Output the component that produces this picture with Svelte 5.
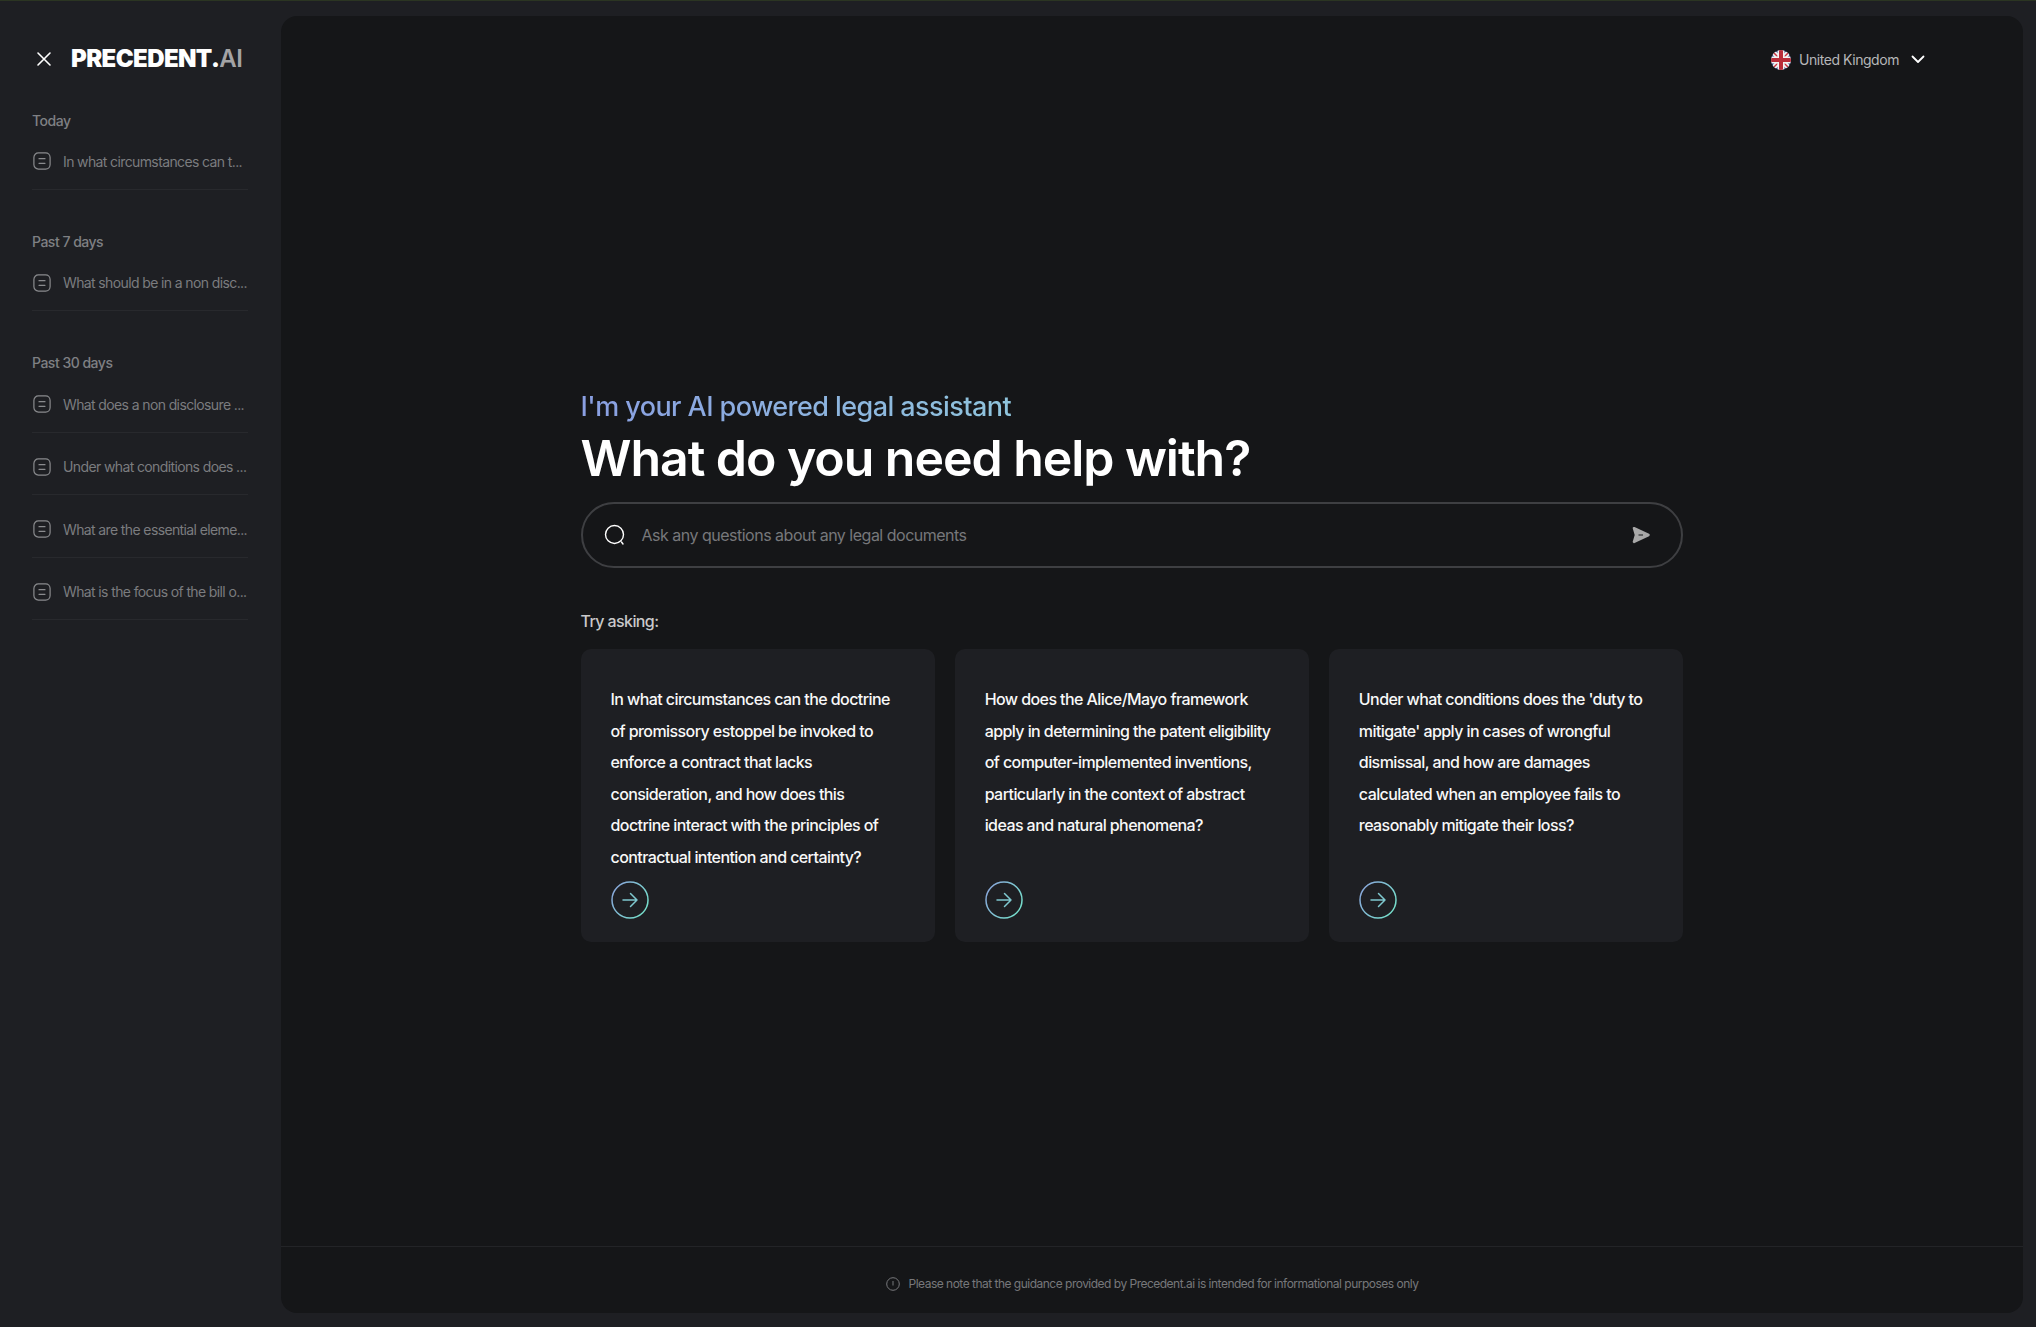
<script>
  const groups = [
    { label: 'Today', items: ['In what circumstances can t...'] },
    { label: 'Past 7 days', items: ['What should be in a non disc...'] },
    { label: 'Past 30 days', items: ['What does a non disclosure ...', 'Under what conditions does ...', 'What are the essential eleme...', 'What is the focus of the bill o...'] }
  ];
  const cards = [
    'In what circumstances can the doctrine of promissory estoppel be invoked to enforce a contract that lacks consideration, and how does this doctrine interact with the principles of contractual intention and certainty?',
    'How does the Alice/Mayo framework apply in determining the patent eligibility of computer-implemented inventions, particularly in the context of abstract ideas and natural phenomena?',
    "Under what conditions does the 'duty to mitigate' apply in cases of wrongful dismissal, and how are damages calculated when an employee fails to reasonably mitigate their loss?"
  ];
</script>

<div class="page">
  <aside class="sidebar">
    <div class="brand">
      <svg class="close" viewBox="0 0 16 16" width="16" height="16" fill="none" stroke="#fff" stroke-width="1.6" stroke-linecap="round"><path d="M2 2l12 12M14 2L2 14" /></svg>
      <span class="logo">PRECEDENT.<span class="ai">AI</span></span>
    </div>
    {#each groups as g}
      <section class="group">
        <h3>{g.label}</h3>
        {#each g.items as item}
          <div class="row">
            <svg class="doc" viewBox="0 0 18 18" width="18" height="18" fill="none" stroke="#8a8b8e" stroke-width="1.2" stroke-linecap="round">
              <rect x="0.9" y="0.9" width="16.2" height="16.2" rx="4.5" />
              <path d="M6 6.7h6M6 11.3h6" />
            </svg>
            <span class="row-text">{item}</span>
          </div>
        {/each}
      </section>
    {/each}
  </aside>

  <main class="main">
    <header class="top">
      <svg class="flag" viewBox="0 0 20 20" width="20" height="20">
        <defs><clipPath id="fc"><circle cx="10" cy="10" r="10" /></clipPath></defs>
        <g clip-path="url(#fc)">
          <rect width="20" height="20" fill="#2d3d80" />
          <path d="M0 0L20 20M20 0L0 20" stroke="#f2f2f2" stroke-width="5" />
          <path d="M0 0L20 20M20 0L0 20" stroke="#c8303e" stroke-width="1.4" />
          <path d="M10 0V20M0 10H20" stroke="#f2f2f2" stroke-width="7" />
          <path d="M10 0V20M0 10H20" stroke="#b92c3a" stroke-width="4" />
        </g>
      </svg>
      <span class="country">United Kingdom</span>
      <svg class="chev" viewBox="0 0 14 9" width="14" height="9" fill="none" stroke="#fff" stroke-width="1.8" stroke-linecap="round" stroke-linejoin="round"><path d="M1.5 1.5L7 7l5.5-5.5" /></svg>
    </header>

    <div class="content">
      <p class="sub">I'm your AI powered legal assistant</p>
      <h1>What do you need help with?</h1>
      <div class="search">
        <svg viewBox="0 0 22 22" width="22" height="22" fill="none" stroke="#fff" stroke-width="1.4" stroke-linecap="round"><circle cx="10.5" cy="10.5" r="9" /><path d="M17.5 18l1.5 2" /></svg>
        <span class="placeholder">Ask any questions about any legal documents</span>
        <svg class="send" viewBox="0 0 20 20" width="20" height="20"><path d="M3 3.2L17.500 10L3 16.800L5 10Z" fill="#a8a8a8" stroke="#a8a8a8" stroke-width="2.600" stroke-linejoin="round" /><path d="M7.500 10H12" stroke="#151618" stroke-width="1" /></svg>
      </div>
      <p class="try">Try asking:</p>
      <div class="cards">
        {#each cards as c, i}
          <article class="card">
            <p>{c}</p>
            <svg class="go" viewBox="0 0 38 38" width="38" height="38" fill="none">
              <defs>
                <linearGradient id={'g' + i} x1="0" y1="0" x2="1" y2="0.6">
                  <stop offset="0" stop-color="#8ba0dc" />
                  <stop offset="1" stop-color="#76dccb" />
                </linearGradient>
              </defs>
              <circle cx="19" cy="19" r="18" stroke={`url(#g${i})`} stroke-width="1.5" />
              <path d="M12 19H26M19.500 12.500L26 19l-6.500 6.500" stroke="#7fc8cf" stroke-width="1.5" stroke-linecap="round" stroke-linejoin="round" />
            </svg>
          </article>
        {/each}
      </div>
    </div>

    <footer class="foot">
      <svg viewBox="0 0 14 14" width="14" height="14" fill="none" stroke="#77787b" stroke-width="1"><circle cx="7" cy="7" r="6.300" /><path d="M7 4v4.500" /></svg>
      <span>Please note that the guidance provided by Precedent.ai is intended for informational purposes only</span>
    </footer>
  </main>
</div>

<style>
  :global(body) {
    margin: 0;
    background: #1e1f23;
    font-family: Inter, "Liberation Sans", sans-serif;
  }
  .page {
    box-sizing: border-box;
    display: flex;
    height: 1327px;
    border-top: 1px solid #2b3522;
    padding: 15px 13px 14px 0;
    overflow: hidden;
  }
  .sidebar {
    box-sizing: border-box;
    width: 281px;
    flex: none;
    margin-top: -16px;
    padding: 0 33px 0 32px;
  }
  .brand {
    box-sizing: border-box;
    display: flex;
    align-items: center;
    height: 110px;
    padding: 7px 0 0 4px;
    gap: 19px;
  }
  .close { flex: none; }
  .logo {
    font-weight: 900;
    font-size: 24px;
    line-height: 1;
    letter-spacing: -0.6px;
    color: #fff;
    white-space: nowrap;
  }
  .ai { color: #a3a3a5; font-weight: 600; }
  .group { margin-bottom: 42px; }
  .group + .group h3 { margin-top: -1px; }
  .group + .group h3 + .row { margin-top: 3px; }
  h3 {
    margin: 0;
    height: 22px;
    line-height: 22px;
    font-size: 14px;
    font-weight: 500;
    letter-spacing: -0.5px;
    color: #7f8083;
  }
  .row {
    box-sizing: border-box;
    display: flex;
    align-items: center;
    gap: 12px;
    height: 62.500px;
    padding-top: 7px;
    border-bottom: 1px solid #28292d;
  }
  h3 + .row { height: 55.500px; margin-top: 2px; padding-top: 0; }
  .doc { flex: none; margin-left: 1px; }
  .row-text {
    font-size: 14px;
    letter-spacing: -0.62px;
    color: #7b7c7f;
    white-space: nowrap;
  }
  .main {
    flex: 1;
    min-width: 0;
    display: flex;
    flex-direction: column;
    background: #151618;
    border-radius: 16px;
  }
  .top {
    display: flex;
    align-items: center;
    height: 87px;
    padding-left: 1490px;
    box-sizing: border-box;
  }
  .country {
    margin-left: 8px;
    font-size: 14px;
    letter-spacing: -0.45px;
    color: #b6b6b8;
  }
  .chev { margin-left: 12px; }
  .content {
    flex: 1;
    box-sizing: border-box;
    width: 1402px;
    padding: 287px 0 0 299.500px;
  }
  .sub {
    margin: 0;
    font-size: 27px;
    line-height: 33px;
    font-weight: 450;
    letter-spacing: -0.57px;
    width: max-content;
    background: linear-gradient(90deg, #8a9fe2, #8fc4dc);
    -webkit-background-clip: text;
    background-clip: text;
    color: transparent;
  }
  h1 {
    margin: 0;
    font-size: 50px;
    line-height: 70px;
    font-weight: 575;
    letter-spacing: -1.050px;
    color: #fff;
  }
  .search {
    box-sizing: border-box;
    display: flex;
    align-items: center;
    height: 66px;
    margin-top: 9px;
    padding: 0 30px 0 21px;
    border: 2px solid #3e3f42;
    border-radius: 33px;
  }
  .placeholder {
    flex: 1;
    margin-left: 16px;
    font-size: 16px;
    letter-spacing: -0.5px;
    color: #77787b;
  }
  .try {
    margin: 43px 0 0;
    font-size: 16px;
    line-height: 20px;
    font-weight: 500;
    letter-spacing: -0.6px;
    color: #c9c9ca;
  }
  .cards {
    display: grid;
    grid-template-columns: repeat(3, 1fr);
    gap: 20px;
    margin-top: 18px;
  }
  .card {
    box-sizing: border-box;
    display: flex;
    flex-direction: column;
    height: 293px;
    padding: 35px 30px 0;
    background: #1e1f23;
    border-radius: 10px;
  }
  .card p {
    flex: 1;
    margin: 0;
    font-size: 16px;
    line-height: 31.500px;
    font-weight: 550;
    letter-spacing: -0.58px;
    color: #f8f8f8;
  }
  .go { flex: none; margin-bottom: 23px; }
  .foot {
    display: flex;
    align-items: center;
    justify-content: center;
    gap: 9px;
    height: 67px;
    box-sizing: border-box;
    padding-top: 7px;
    border-top: 1px solid #232427;
    font-size: 12px;
    letter-spacing: -0.51px;
    color: #77787b;
  }
</style>
